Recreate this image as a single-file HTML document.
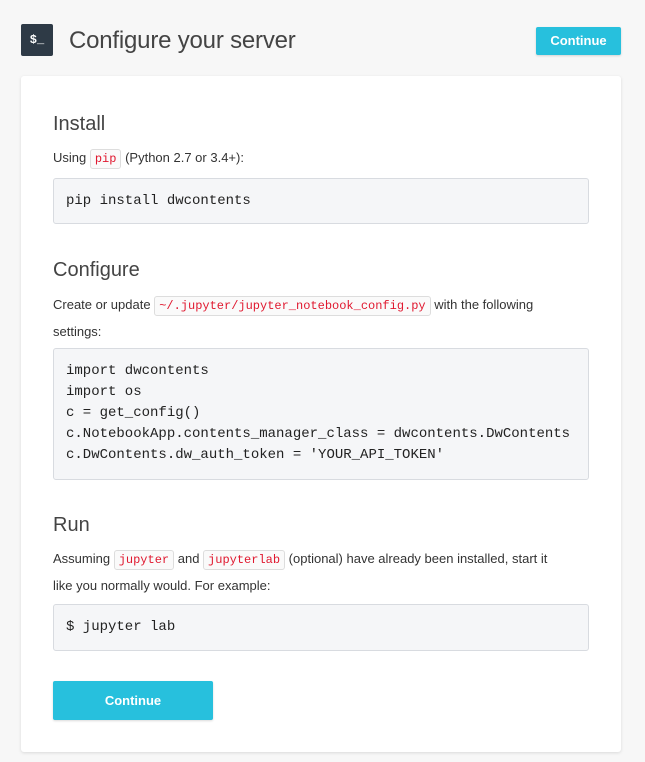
<!DOCTYPE html><html><head><style>
body{margin:0;background:#f7f7f7;font-family:"Liberation Sans",sans-serif;color:#333;width:645px;height:762px;position:relative;overflow:hidden}
.a{position:absolute}
.icon{left:21px;top:24px;width:32px;height:32px;background:#2e3a46;border-radius:2px;color:#fff;font:bold 12px "Liberation Mono",monospace;line-height:32px;text-align:center}
h1{position:absolute;left:69px;top:27px;margin:0;font-size:24px;font-weight:normal;color:#444;letter-spacing:-0.2px}
.btn{background:#27c0dd;color:#fff;font-weight:bold;font-size:13px;text-align:center;border-radius:2px;box-shadow:0 1px 2px rgba(0,0,0,.15)}
.card{left:21px;top:76px;width:600px;height:676px;background:#fff;border-radius:3px;box-shadow:0 1px 3px rgba(0,0,0,.12)}
h2{position:absolute;left:53px;margin:0;font-size:20px;font-weight:normal;color:#444}
p{position:absolute;left:53px;margin:0;font-size:13px;line-height:26px;width:512px;color:#333}
code{font-family:"Liberation Mono",monospace;color:#e0182f;font-size:12px;border:1px solid #ddd;border-radius:3px;background:#fafafa;padding:2px 4px}
pre{position:absolute;left:53px;width:510px;margin:0;padding:12px;background:#f5f6f8;border:1px solid #d8dbe0;border-radius:3px;font:14px/21px "Liberation Mono",monospace;color:#222}
</style></head><body>
<div class="a icon">$_</div>
<h1>Configure your server</h1>
<div class="a btn" style="left:536px;top:27px;width:85px;height:28px;line-height:28px">Continue</div>
<div class="a card"></div>
<h2 style="top:113px">Install</h2>
<p style="top:145px">Using <code>pip</code> (Python 2.7 or 3.4+):</p>
<pre style="top:178px;height:20px;line-height:20px">pip install dwcontents</pre>
<h2 style="top:259px">Configure</h2>
<p style="top:292px">Create or update <code>~/.jupyter/jupyter_notebook_config.py</code> with the following settings:</p>
<pre style="top:348px;height:106px;padding-top:12px">import dwcontents
import os
c = get_config()
c.NotebookApp.contents_manager_class = dwcontents.DwContents
c.DwContents.dw_auth_token = 'YOUR_API_TOKEN'</pre>
<h2 style="top:514px">Run</h2>
<p style="top:546px">Assuming <code>jupyter</code> and <code>jupyterlab</code> (optional) have already been installed, start it like you normally would. For example:</p>
<pre style="top:604px;height:21px">$ jupyter lab</pre>
<div class="a btn" style="left:53px;top:681px;width:160px;height:39px;line-height:39px">Continue</div>
</body></html>
